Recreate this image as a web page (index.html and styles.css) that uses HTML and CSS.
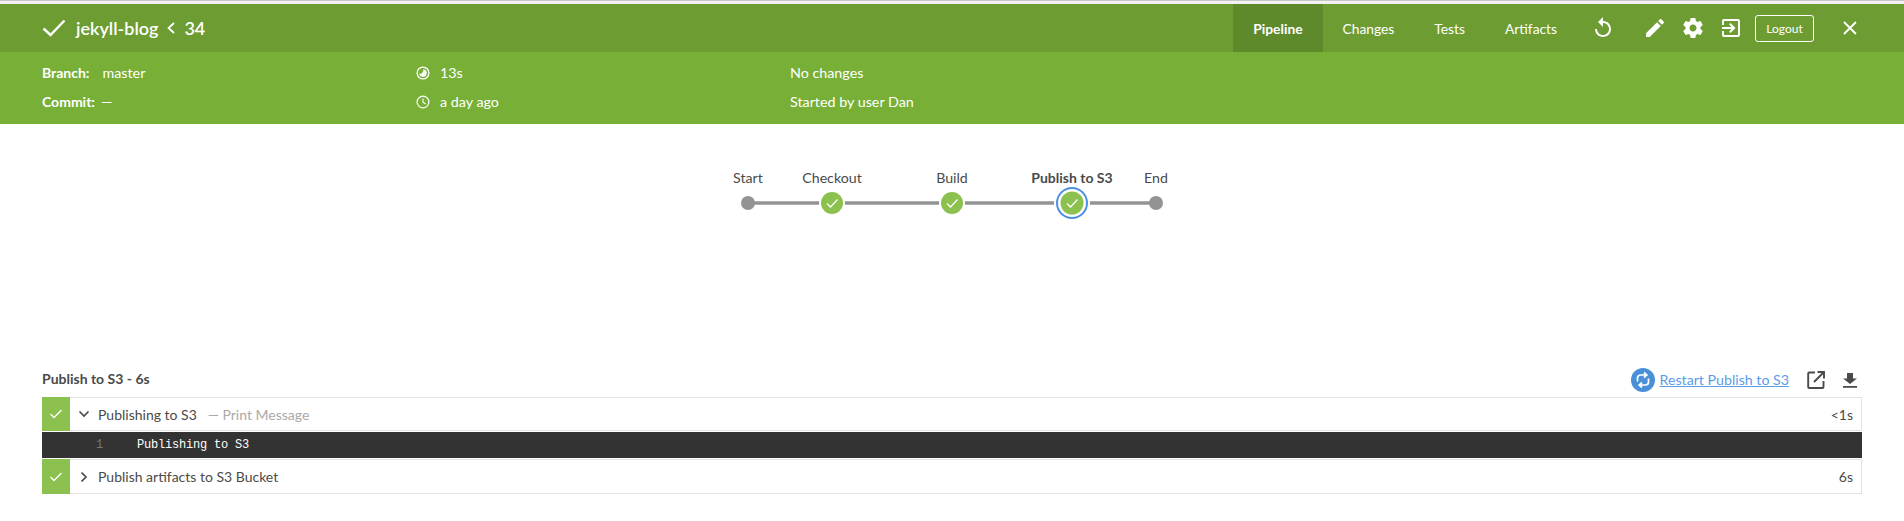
FILE: index.html
```html
<!DOCTYPE html>
<html lang="en">
<head>
<meta charset="utf-8">
<title>jekyll-blog 34</title>
<link rel="stylesheet" href="styles.css">
</head>
<body>
<div class="topline"></div>
<header class="bar">
  <div class="title">
    <svg class="title-check" viewBox="0 0 24 18" width="24" height="18"><path d="M1.5 9.5 L8.5 16 L22.5 1.5" fill="none" stroke="#fff" stroke-width="2.4"/></svg>
    <span class="title-name">jekyll-blog</span>
    <svg class="title-sep" viewBox="0 0 10 14" width="10" height="14"><path d="M8 2 L2.5 7 L8 12" fill="none" stroke="#fff" stroke-width="1.7"/></svg>
    <span class="title-num">34</span>
  </div>
  <nav class="tabs">
    <a class="tab active">Pipeline</a>
    <a class="tab">Changes</a>
    <a class="tab">Tests</a>
    <a class="tab">Artifacts</a>
  </nav>
  <div class="actions">
    <svg class="act-replay" viewBox="0 0 24 24" width="24" height="24"><path d="M12 5V1L7 6l5 5V7c3.31 0 6 2.69 6 6s-2.69 6-6 6-6-2.69-6-6H4c0 4.42 3.58 8 8 8s8-3.58 8-8-3.58-8-8-8z" fill="#fff"/></svg>
    <svg class="act-edit" viewBox="0 0 24 24" width="24" height="24"><path d="M3 17.25V21h3.75L17.81 9.94l-3.75-3.75L3 17.25zM20.71 7.04a1 1 0 0 0 0-1.41l-2.34-2.34a1 1 0 0 0-1.41 0l-1.83 1.83 3.75 3.75 1.83-1.83z" fill="#fff"/></svg>
    <svg class="act-gear" viewBox="0 0 24 24" width="24" height="24"><path d="M19.43 12.98c.04-.32.07-.64.07-.98s-.03-.66-.07-.98l2.11-1.65c.19-.15.24-.42.12-.64l-2-3.46c-.12-.22-.39-.3-.61-.22l-2.49 1c-.52-.4-1.08-.73-1.69-.98l-.38-2.65A.488.488 0 0 0 14 2h-4c-.25 0-.46.18-.49.42l-.38 2.65c-.61.25-1.17.59-1.69.98l-2.49-1c-.23-.09-.49 0-.61.22l-2 3.46c-.13.22-.07.49.12.64l2.11 1.65c-.04.32-.07.65-.07.98s.03.66.07.98l-2.11 1.65c-.19.15-.24.42-.12.64l2 3.46c.12.22.39.3.61.22l2.49-1c.52.4 1.08.73 1.69.98l.38 2.65c.03.24.24.42.49.42h4c.25 0 .46-.18.49-.42l.38-2.65c.61-.25 1.17-.59 1.69-.98l2.49 1c.23.09.49 0 .61-.22l2-3.46c.12-.22.07-.49-.12-.64l-2.11-1.65zM12 15.5c-1.93 0-3.5-1.57-3.5-3.5s1.57-3.5 3.5-3.5 3.5 1.57 3.5 3.5-1.57 3.5-3.5 3.5z" fill="#fff"/></svg>
    <svg class="act-exit" viewBox="0 0 24 24" width="24" height="24"><path d="M10.09 15.59L11.5 17l5-5-5-5-1.41 1.41L12.67 11H3v2h9.67l-2.58 2.59zM19 3H5c-1.11 0-2 .9-2 2v4h2V5h14v14H5v-4H3v4c0 1.1.89 2 2 2h14c1.1 0 2-.9 2-2V5c0-1.1-.9-2-2-2z" fill="#fff"/></svg>
    <a class="logout">Logout</a>
    <svg class="act-close" viewBox="0 0 18 18" width="18" height="18"><path d="M3 3 L15 15 M15 3 L3 15" stroke="#fff" stroke-width="1.9" fill="none"/></svg>
  </div>
</header>
<section class="info">
  <div class="col col-a">
    <div class="line"><b>Branch:</b><span class="val-branch">master</span></div>
    <div class="line"><b>Commit:</b><span class="val-commit">—</span></div>
  </div>
  <div class="col col-b">
    <div class="line">
      <svg class="ico" viewBox="0 0 14 14" width="14" height="14"><circle cx="7" cy="7" r="5.9" fill="none" stroke="#fff" stroke-width="1.3"/><path d="M7.4 3.2 A3.8 3.8 0 1 1 3.2 7.6 C5.8 8.2 7.6 6 7.4 3.2z" fill="#fff"/></svg>
      <span>13s</span>
    </div>
    <div class="line">
      <svg class="ico" viewBox="0 0 14 14" width="14" height="14"><circle cx="7" cy="7" r="5.9" fill="none" stroke="#fff" stroke-width="1.2"/><path d="M7 3.4 V7.3 L9.6 9" fill="none" stroke="#fff" stroke-width="1.1"/></svg>
      <span>a day ago</span>
    </div>
  </div>
  <div class="col col-c">
    <div class="line">No changes</div>
    <div class="line">Started by user Dan</div>
  </div>
</section>
<main>
  <div class="graph-wrap">
    <svg class="graph" viewBox="0 0 456 60" width="456" height="60">
      <g class="lines">
        <line x1="24" y1="43" x2="432" y2="43"/>
      </g>
      <text class="lbl" x="24" y="23">Start</text>
      <text class="lbl" x="108" y="23">Checkout</text>
      <text class="lbl" x="228" y="23">Build</text>
      <text class="lbl strong" x="348" y="23">Publish to S3</text>
      <text class="lbl" x="432" y="23">End</text>
      <circle class="dot" cx="24" cy="43" r="7"/>
      <circle class="halo" cx="108" cy="43" r="13"/>
      <circle class="ok" cx="108" cy="43" r="11"/>
      <path class="tick" d="M103 43.5 L106.5 47 L113.5 39.5"/>
      <circle class="halo" cx="228" cy="43" r="13"/>
      <circle class="ok" cx="228" cy="43" r="11"/>
      <path class="tick" d="M223 43.5 L226.5 47 L233.5 39.5"/>
      <circle class="halo" cx="348" cy="43" r="18"/>
      <circle class="sel" cx="348" cy="43" r="15"/>
      <circle class="ok" cx="348" cy="43" r="11.5"/>
      <path class="tick" d="M343 43.5 L346.5 47 L353.5 39.5"/>
      <circle class="dot" cx="432" cy="43" r="7"/>
    </svg>
  </div>
  <section class="steps">
    <div class="steps-head">
      <h2>Publish to S3 - 6s</h2>
      <div class="steps-tools">
        <svg class="restart-ico" viewBox="0 0 24 24" width="24" height="24"><circle cx="12" cy="12" r="12" fill="#4a90d9"/><path d="M6.5 13.5 V10 a3 3 0 0 1 3-3 H15 M13 4.5 L15.8 7 L13 9.5 M17.5 10.5 V14 a3 3 0 0 1-3 3 H9 M11 14.5 L8.2 17 L11 19.5" fill="none" stroke="#fff" stroke-width="1.7"/></svg>
        <a class="restart">Restart Publish to S3</a>
        <svg class="tool-open" viewBox="0 0 20 20" width="20" height="20"><path d="M9 2.5 H3.2 a1 1 0 0 0-1 1 V17 a1 1 0 0 0 1 1 H16.5 a1 1 0 0 0 1-1 V11" fill="none" stroke="#4a4a4a" stroke-width="1.9"/><path d="M8 12 L17 3 M11.5 2 H18 V8.5" fill="none" stroke="#4a4a4a" stroke-width="1.9"/></svg>
        <svg class="tool-down" viewBox="0 0 16 16" width="16" height="16"><path d="M5 1 H11 V6.5 H15 L8 12 L1 6.5 H5z M1 14 H15 V15.8 H1z" fill="#4a4a4a"/></svg>
      </div>
    </div>
    <div class="step step-open">
      <div class="step-status"><svg viewBox="0 0 14 12" width="14" height="12"><path d="M1.5 6 L5 9.5 L12.5 2" fill="none" stroke="#fff" stroke-width="1.3"/></svg></div>
      <svg class="chev" viewBox="0 0 12 12" width="12" height="12"><path d="M1.5 3.5 L6 8 L10.5 3.5" fill="none" stroke="#4a4a4a" stroke-width="1.7"/></svg>
      <span class="step-name">Publishing to S3</span>
      <span class="step-desc">— Print Message</span>
      <span class="step-time">&lt;1s</span>
    </div>
    <div class="log"><span class="log-num">1</span><span class="log-text">Publishing to S3</span></div>
    <div class="step">
      <div class="step-status"><svg viewBox="0 0 14 12" width="14" height="12"><path d="M1.5 6 L5 9.5 L12.5 2" fill="none" stroke="#fff" stroke-width="1.3"/></svg></div>
      <svg class="chev" viewBox="0 0 12 12" width="12" height="12"><path d="M3.5 1.5 L8 6 L3.5 10.5" fill="none" stroke="#4a4a4a" stroke-width="1.7"/></svg>
      <span class="step-name">Publish artifacts to S3 Bucket</span>
      <span class="step-time">6s</span>
    </div>
  </section>
</main>
</body>
</html>
```
FILE: styles.css
```css
* { box-sizing: border-box; }
html, body { margin: 0; padding: 0; background: #fff; }
body { font-family: Lato, "Open Sans", sans-serif; font-size: 14px; color: #4a4a4a; overflow: hidden; height: 521px; }
.topline { height: 4px; background: #f2f2f2; border-top: 1px solid #c8c8c8; }
.bar { height: 48px; background: #6d9c32; color: #fff; display: flex; align-items: center; padding-left: 42px; }
.title { display: flex; align-items: center; flex: 1; font-size: 18px; font-weight: 600; }
.title-check { margin-right: 10px; }
.title-sep { margin: 0 8px 0 8px; }
.tabs { display: flex; align-self: stretch; }
.tab { display: flex; align-items: center; justify-content: center; font-size: 13.8px; padding: 0 20px; }
.tab.active { background: #5f8a2c; font-weight: 700; }
.actions { display: flex; align-items: center; width: 327px; padding-left: 14px; }
.actions svg { flex: none; }
.act-edit { margin-left: 28px; }
.act-gear { margin-left: 14px; }
.act-exit { margin-left: 14px; }
.logout { margin-left: 12px; width: 59px; height: 27px; border: 1px solid #fff; border-radius: 3px; font-size: 12px; display: flex; align-items: center; justify-content: center; }
.act-close { margin-left: 27px; }
.info { height: 72px; background: #78b037; color: #fff; display: flex; padding: 6px 0 0 42px; font-size: 14.3px; }
.col { display: flex; flex-direction: column; }
.col-a { width: 374px; }
.col-b { width: 374px; }
.line { height: 29px; display: flex; align-items: center; }
.line b { font-weight: 700; font-size: 14px; }
.val-branch { margin-left: 13px; }
.val-commit { margin-left: 6px; }
.ico { margin-right: 10px; }
.graph-wrap { display: flex; justify-content: center; padding: 36px 0 0 0; height: 240px; }
.graph { overflow: visible; }
.lines line { stroke: #949393; stroke-width: 3.5; }
.lbl { font-family: Lato, sans-serif; font-size: 14.2px; fill: #4a4a4a; text-anchor: middle; }
.lbl.strong { font-weight: 700; font-size: 14px; }
.dot { fill: #949393; }
.halo { fill: #fff; }
.ok { fill: #8cc04f; }
.sel { fill: none; stroke: #4a90e2; stroke-width: 2; }
.tick { fill: none; stroke: #fff; stroke-width: 1.3; }
.steps { padding: 0 42px; }
.steps-head { display: flex; align-items: center; justify-content: space-between; height: 32px; margin-bottom: 1px; }
.steps-head h2 { margin: 0 0 4px; font-size: 14px; font-weight: 700; }
.steps-tools { display: flex; align-items: center; }
.restart { color: #5a9ce6; text-decoration: underline; font-size: 14.2px; margin: 0 0 2px 5px; }
.tool-open { margin-left: 17px; }
.tool-down { margin-left: 16px; margin-right: 4px; }
.step { height: 35px; display: flex; align-items: center; border: 1px solid #e2e2e2; border-left: 0; background: #fff; margin-bottom: 1px; }
.step-open { height: 34px; }
.step-status { width: 28px; align-self: stretch; margin: -1px 0; background: #8cc04f; display: flex; align-items: center; justify-content: center; }
.chev { margin: 0 8px 0 8px; }
.step-name { font-size: 14px; }
.step-desc { font-size: 14px; color: #a9a9a9; margin-left: 11px; }
.step-time { margin-left: auto; margin-right: 8px; font-size: 14px; }
.log { height: 26px; background: #333; color: #fff; display: flex; align-items: center; margin-bottom: 1px; font-family: "Liberation Mono", monospace; font-size: 12px; letter-spacing: -0.2px; }
.log-num { color: #777; margin-left: 54px; }
.log-text { margin-left: 34px; }
```
